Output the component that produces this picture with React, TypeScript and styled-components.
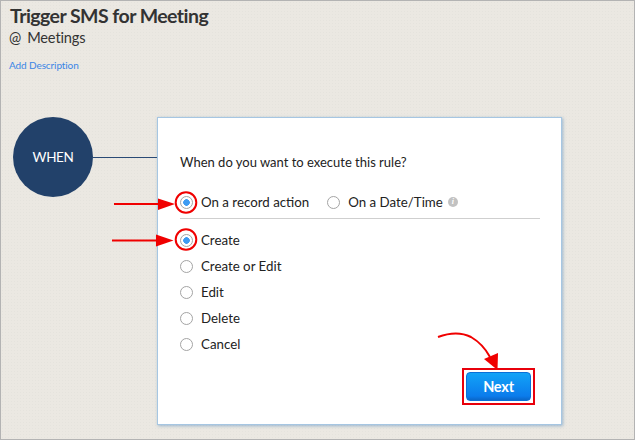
import styled, { createGlobalStyle } from 'styled-components';

const GlobalStyle = createGlobalStyle`
  html, body {
    margin: 0;
    padding: 0;
    background: #ffffff;
  }
  * {
    box-sizing: border-box;
  }
`;

const Frame = styled.div`
  position: relative;
  width: 635px;
  height: 440px;
  border: 1px solid #b3b3b3;
  background-color: #ebe8e2;
  background-image: radial-gradient(rgba(0, 0, 0, 0.025) 1px, transparent 1px);
  background-size: 3px 3px;
  font-family: Lato, 'Liberation Sans', sans-serif;
  color: #2b2b2b;
  overflow: hidden;
`;

const Header = styled.div`
  padding: 3px 0 0 8px;
`;

const Title = styled.h1`
  margin: 0 0 0 1px;
  font-size: 19.5px;
  line-height: 24px;
  font-weight: 700;
  letter-spacing: -0.55px;
  color: #333333;
`;

const Module = styled.div`
  margin-top: 1px;
  font-size: 14.6px;
  line-height: 18px;
  letter-spacing: -0.15px;
  word-spacing: 2.5px;
  color: #333333;
`;

const AddLink = styled.a`
  display: block;
  margin-top: 12px;
  font-size: 10px;
  line-height: 12px;
  letter-spacing: -0.1px;
  color: #3a86e6;
  text-decoration: none;
`;

const Canvas = styled.div`
  display: flex;
  align-items: flex-start;
  margin-top: 46px;
  padding-left: 12px;
`;

const WhenNode = styled.div`
  flex: none;
  width: 80px;
  height: 80px;
  border-radius: 50%;
  background: #22416a;
  color: #ffffff;
  display: flex;
  align-items: center;
  justify-content: center;
  font-size: 13.5px;
  letter-spacing: -0.4px;
`;

const Connector = styled.div`
  flex: none;
  width: 64px;
  height: 1px;
  margin-top: 40px;
  background: #2a4a75;
`;

const Panel = styled.div`
  flex: none;
  display: flex;
  flex-direction: column;
  width: 405px;
  height: 308px;
  padding: 36px 22px 0 22px;
  background: #ffffff;
  border: 1px solid #a6c6e2;
  box-shadow: 1px 1px 3px rgba(88, 140, 190, 0.55);
`;

const Question = styled.div`
  font-size: 13px;
  line-height: 17px;
  color: #222222;
`;

const TypeRow = styled.div`
  display: flex;
  align-items: center;
  height: 20px;
  margin-top: 21px;
`;

const Option = styled.label<{ $gap?: number }>`
  display: flex;
  align-items: center;
  margin-left: ${(p) => p.$gap ?? 0}px;
  font-size: 13.3px;
  color: #222222;
`;

const Radio = styled.span<{ $on?: boolean }>`
  flex: none;
  width: 13px;
  height: 13px;
  margin-right: 8px;
  border-radius: 50%;
  border: 1px solid #a4a4a4;
  background: ${(p) =>
    p.$on ? 'radial-gradient(circle, #3d9bf2 0 3px, #ffffff 3.6px)' : '#ffffff'};
`;

const Info = styled.span`
  width: 10px;
  height: 10px;
  margin-left: 5px;
  border-radius: 50%;
  background: #c2c2c2;
  color: #ffffff;
  font-size: 8px;
  font-weight: 700;
  font-style: italic;
  line-height: 10px;
  text-align: center;
  font-family: 'Liberation Serif', serif;
`;

const Divider = styled.div`
  width: 360px;
  height: 1px;
  margin-top: 6px;
  background: #cfcfcf;
`;

const ActionList = styled.div`
  display: flex;
  flex-direction: column;
  margin-top: 8px;
`;

const ActionRow = styled(Option)`
  height: 26px;
`;

const Footer = styled.div`
  display: flex;
  justify-content: flex-end;
  margin-top: auto;
  padding: 0 4px 19px 0;
`;

// red callout frame drawn around the button in the screenshot
const Highlight = styled.div`
  display: flex;
  padding: 2px;
  border: 2px solid #e8000b;
`;

const NextButton = styled.button`
  width: 65px;
  height: 29px;
  padding: 0;
  border: 1px solid #0a6fd8;
  border-radius: 4px;
  background: linear-gradient(#12a3f7, #0b7cec 85%, #0a67c9);
  color: #ffffff;
  font-family: Lato, 'Liberation Sans', sans-serif;
  font-size: 14.5px;
  font-weight: 700;
  letter-spacing: -0.2px;
`;

const Marks = styled.svg`
  position: absolute;
  left: 0;
  top: 0;
  pointer-events: none;
`;

const actions = ['Create', 'Create or Edit', 'Edit', 'Delete', 'Cancel'];

function Annotations() {
  const red = '#f00000';
  return (
    <Marks width={635} height={440} viewBox="0 0 635 440">
      <line x1={113} y1={203} x2={160} y2={203} stroke={red} strokeWidth={2} />
      <polygon points="157,197.5 174,203 157,209" fill={red} />
      <circle cx={185} cy={201.5} r={10.3} fill="none" stroke={red} strokeWidth={2} />

      <line x1={111} y1={239.5} x2={158} y2={239.5} stroke={red} strokeWidth={2} />
      <polygon points="155,233.5 172.5,239.5 155,245.5" fill={red} />
      <circle cx={185} cy={238.5} r={10.3} fill="none" stroke={red} strokeWidth={2} />

      <path
        d="M437 336 Q456 329 470 336 Q482 343 489 356"
        fill="none"
        stroke={red}
        strokeWidth={2}
      />
      <polygon points="483,358 497,352 496.5,369" fill={red} />
    </Marks>
  );
}

export default function App() {
  return (
    <>
      <GlobalStyle />
      <Frame>
        <Header>
          <Title>Trigger SMS for Meeting</Title>
          <Module>@ Meetings</Module>
          <AddLink href="#">Add Description</AddLink>
        </Header>

        <Canvas>
          <WhenNode>WHEN</WhenNode>
          <Connector />
          <Panel>
            <Question>When do you want to execute this rule?</Question>

            <TypeRow>
              <Option>
                <Radio $on />
                On a record action
              </Option>
              <Option $gap={18}>
                <Radio />
                On a Date/Time
                <Info>i</Info>
              </Option>
            </TypeRow>
            <Divider />

            <ActionList>
              {actions.map((a, i) => (
                <ActionRow key={a}>
                  <Radio $on={i === 0} />
                  {a}
                </ActionRow>
              ))}
            </ActionList>

            <Footer>
              <Highlight>
                <NextButton type="button">Next</NextButton>
              </Highlight>
            </Footer>
          </Panel>
        </Canvas>

        <Annotations />
      </Frame>
    </>
  );
}
